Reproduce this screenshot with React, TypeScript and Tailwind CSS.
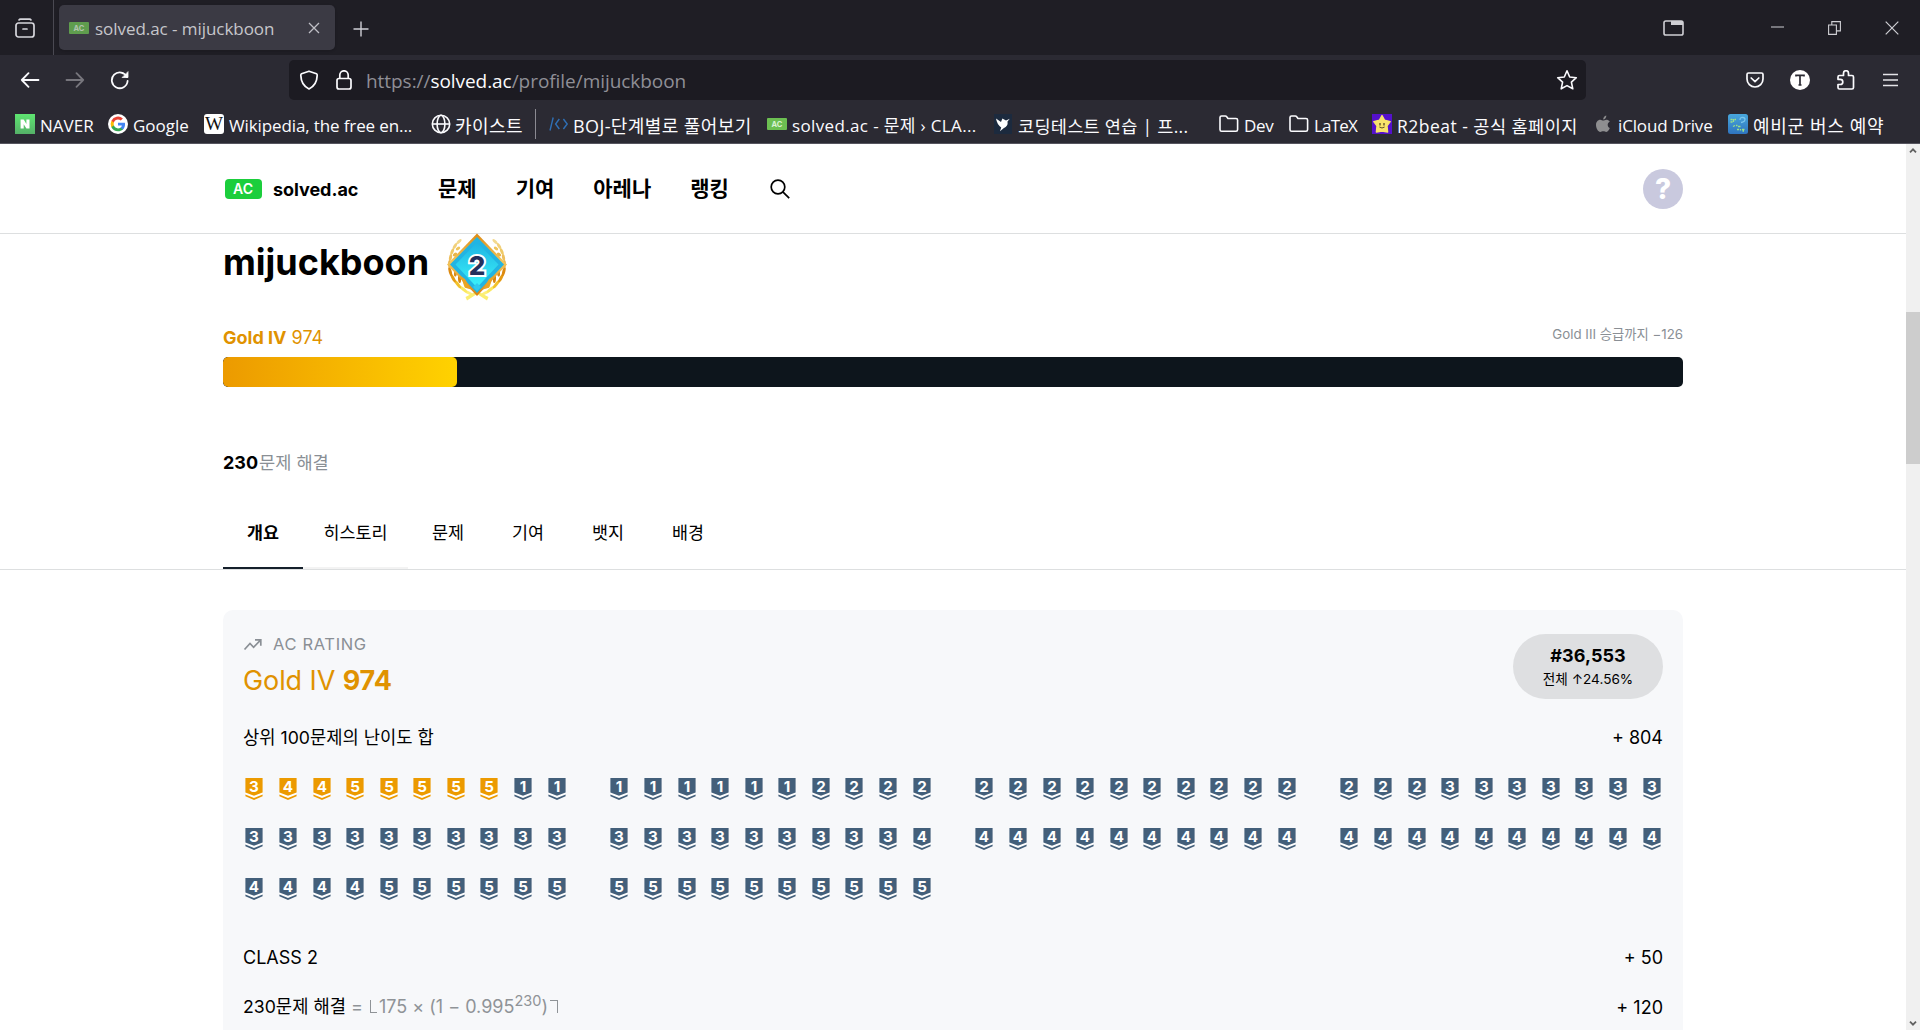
import type { ReactNode } from "react";

function AcFavicon() {
  return (
    <svg width="20" height="20" viewBox="0 0 20 20">
      <rect y="4" width="20" height="12" rx="1" fill="#6cbf52" />
      <text x="10" y="12.8" textAnchor="middle" className="fill-[#d9f2d2] font-['Inter'] text-[7.5px] font-bold">
        AC
      </text>
    </svg>
  );
}

function GlobeIcon() {
  return (
    <svg width="20" height="20" viewBox="0 0 20 20" fill="none" stroke="#fbfbfe" strokeWidth="1.6">
      <circle cx="10" cy="10" r="8.7" />
      <ellipse cx="10" cy="10" rx="3.9" ry="8.7" />
      <path d="M1.5 10h17" />
    </svg>
  );
}

function FolderIcon() {
  return (
    <svg width="20" height="20" viewBox="0 0 20 20" fill="none" stroke="#fbfbfe" strokeWidth="1.6" strokeLinejoin="round">
      <path d="M1 15.5V3.6Q1 2 2.6 2H6.4Q7.2 2 7.7 2.7L9 4.5H17Q18.6 4.5 18.6 6.1V15.5Q18.6 17.2 17 17.2H2.6Q1 17.2 1 15.5Z" />
    </svg>
  );
}

function NaverIcon() {
  return (
    <svg width="20" height="20" viewBox="0 0 20 20">
      <defs>
        <linearGradient id="naver" x1="0" y1="0" x2="0" y2="1">
          <stop offset="0" stopColor="#5ee571" />
          <stop offset="1" stopColor="#55b068" />
        </linearGradient>
      </defs>
      <rect width="20" height="20" fill="url(#naver)" />
      <path d="M5.6 5.6h3.1l2.7 4.3V5.6h3.1v9h-3.1L8.7 10.2v4.4H5.6Z" fill="#fff" />
    </svg>
  );
}

function GoogleIcon() {
  return (
    <svg width="20" height="20" viewBox="0 0 20 20">
      <circle cx="10" cy="10" r="10" fill="#fff" />
      <g transform="translate(2.6 2.6) scale(.82)">
        <path fill="#4285F4" d="M17.6 9.2c0-.6-.1-1.2-.2-1.8H9v3.5h4.8c-.2 1.1-.8 2.1-1.8 2.7v2.3h2.9c1.7-1.6 2.7-3.9 2.7-6.7z" />
        <path fill="#34A853" d="M9 18c2.4 0 4.5-.8 6-2.2l-2.9-2.3c-.8.5-1.9.9-3.1.9-2.3 0-4.3-1.6-5-3.7H1V13c1.5 3 4.5 5 8 5z" />
        <path fill="#FBBC05" d="M4 10.7A5.4 5.4 0 0 1 4 7.3V5H1a9 9 0 0 0 0 8z" />
        <path fill="#EA4335" d="M9 3.6c1.3 0 2.5.5 3.4 1.3L15 2.3A9 9 0 0 0 1 5l3 2.3c.7-2.1 2.7-3.7 5-3.7z" />
      </g>
    </svg>
  );
}

function WikipediaIcon() {
  return (
    <svg width="20" height="20" viewBox="0 0 20 20">
      <rect width="20" height="20" rx="3" fill="#fff" />
      <text x="10" y="15.8" textAnchor="middle" textLength="18" lengthAdjust="spacingAndGlyphs" className="fill-[#111] font-['Liberation_Serif'] text-[18px]">
        W
      </text>
    </svg>
  );
}

function BojIcon() {
  return (
    <svg width="20" height="20" viewBox="0 0 20 20" fill="none" stroke="#2f6fb5" strokeWidth="1.4">
      <path d="M4.2 3.5 1 16.5" />
      <path d="M10.3 5 6.6 10l3.7 5M14.4 5l3.8 5-3.8 5" />
    </svg>
  );
}

function ProgrammersIcon() {
  return (
    <svg width="20" height="20" viewBox="0 0 20 20">
      <rect width="18" height="20" fill="#1c2a3e" />
      <path d="M2 4.5 7 8 8.4 4.4 12 6.5 15.8 4.7 13.5 7.6Q14.4 12.4 9.6 14.3L6 17.2 7.2 13.4Q3 10.5 2 4.5Z" fill="#fff" />
    </svg>
  );
}

function R2beatIcon() {
  return (
    <svg width="20" height="20" viewBox="0 0 20 20">
      <rect width="20" height="20" fill="#5511cc" />
      <path d="M10 1.5 12.6 6.3 18.2 7.6 15 11.8 15.6 18 10 17 4.4 18 5 11.8 1.8 7.6 7.4 6.3Z" fill="#f8e36b" stroke="#f8e36b" strokeWidth="1.4" strokeLinejoin="round" />
      <path d="M8 9v2.4M12 9v2.4" stroke="#4a3a20" strokeWidth="1.2" />
      <path d="M7.4 13q2.6 2 5.2 0" stroke="#4a3a20" strokeWidth=".9" fill="none" />
    </svg>
  );
}

function AppleIcon() {
  return (
    <svg width="20" height="20" viewBox="0 0 20 20" fill="#8e8e90">
      <path d="M13.2 5.8c-1.3 0-2 .8-2.9.8S8.4 5.8 7.3 5.8C5 5.8 3 7.9 3 11c0 3.3 2.3 7 4.2 7 1.2 0 1.7-.7 3.1-.7s1.8.7 3 .7c1.6 0 3-2.4 3.5-4-2.8-1.3-2.7-5 0-6.5-.9-1.2-2.3-1.7-3.6-1.7z" />
      <path d="M10.2 5.6C10 3.5 11.5 1.9 13.3 1.5c.2 2.2-1.3 4-3.1 4.1z" />
    </svg>
  );
}

function BusIcon() {
  return (
    <svg width="20" height="20" viewBox="0 0 20 20" fill="none">
      <defs>
        <linearGradient id="bus" x1="0" y1="0" x2="0" y2="1">
          <stop offset="0" stopColor="#48a7dc" />
          <stop offset="1" stopColor="#2f74bf" />
        </linearGradient>
      </defs>
      <rect width="20" height="20" rx="2.5" fill="url(#bus)" />
      <path d="M12 6q0-3 3-2.5t1.5 3.5q-2 1.5-3.5 1.5" stroke="#7cc6ec" strokeWidth="1.3" />
      <path d="M2.5 5.5h2M5.5 5v3M2.5 8h2M6.5 5.5h1.5M5 12.5l2-1M8 11.5h1.5M10 12.5h2.5M9 15.5h2M12.5 15v1.5M14 15.5h2.5M14.5 17h1.5" stroke="#9be08a" strokeWidth="1.3" />
    </svg>
  );
}

type Bookmark = { icon: ReactNode; label: string; width: string; text: string };

const bookmarksLeft: Bookmark[] = [
  { icon: <NaverIcon />, label: "NAVER", width: "w-[93px]", text: "text-[17px]" },
  { icon: <GoogleIcon />, label: "Google", width: "w-[96px]", text: "text-[17px]" },
  { icon: <WikipediaIcon />, label: "Wikipedia, the free en...", width: "w-[227px]", text: "text-[17px] tracking-[-0.12px]" },
  { icon: <GlobeIcon />, label: "카이스트", width: "w-[104px]", text: "text-[18px] tracking-[0.4px] ml-[-1px]" },
];

const bookmarksRight: Bookmark[] = [
  { icon: <BojIcon />, label: "BOJ-단계별로 풀어보기", width: "w-[218px]", text: "text-[18px] tracking-[0.4px] ml-[-1px]" },
  { icon: <AcFavicon />, label: "solved.ac - 문제 › CLA...", width: "w-[227px]", text: "text-[17px] tracking-[0.36px]" },
  { icon: <ProgrammersIcon />, label: "코딩테스트 연습 | 프...", width: "w-[225px]", text: "text-[17.5px] tracking-[0.3px] ml-[-1px]" },
  { icon: <FolderIcon />, label: "Dev", width: "w-[70px]", text: "text-[17px] tracking-[-0.3px]" },
  { icon: <FolderIcon />, label: "LaTeX", width: "w-[83px]", text: "text-[17px] tracking-[-0.8px]" },
  { icon: <R2beatIcon />, label: "R2beat - 공식 홈페이지", width: "w-[221px]", text: "text-[17.5px] tracking-[0.48px]" },
  { icon: <AppleIcon />, label: "iCloud Drive", width: "w-[135px]", text: "text-[17px] tracking-[-0.15px]" },
  { icon: <BusIcon />, label: "예비군 버스 예약", width: "w-[160px]", text: "text-[18px] tracking-[0.65px]" },
];

function BookmarkItem({ icon, label, width, text }: Bookmark) {
  return (
    <div className={`flex shrink-0 items-center gap-[5px] ${width}`}>
      <span className="mt-[-4px] shrink-0">{icon}</span>
      <span className={`whitespace-nowrap leading-[22px] text-[#fbfbfe] ${text}`}>{label}</span>
    </div>
  );
}

function TabStrip() {
  return (
    <div className="flex h-[55px] shrink-0 items-stretch bg-[#1f1e25]">
      <div className="flex w-[54px] items-center border-r border-[#4a4952] pl-[15px]">
        <svg width="20" height="22" viewBox="0 0 20 22" className="mt-[2px]" fill="none" stroke="#d6d6dc" strokeWidth="1.7" strokeLinecap="round">
          <path d="M4 1.9Q4.5 1.2 5.5 1.2h9q1 0 1.5.7" />
          <rect x="1" y="5" width="18" height="14" rx="2.5" />
          <path d="M8 11h4" />
        </svg>
      </div>
      <div className="my-[5px] ml-[5px] flex w-[276px] items-center rounded-[5px] bg-[#3b3a44] shadow">
        <span className="ml-[10px] opacity-75">
          <AcFavicon />
        </span>
        <span className="ml-[6px] mt-[2px] w-[200px] whitespace-nowrap text-[17px] tracking-[-0.05px] text-[#c6c6cb]">solved.ac - mijuckboon</span>
        <svg width="12" height="12" viewBox="0 0 12 12" className="ml-[13px]" stroke="#bfbfc6" strokeWidth="1.3">
          <path d="M1 1l10 10M11 1 1 11" />
        </svg>
      </div>
      <div className="ml-[18px] mt-[2px] flex items-center">
        <svg width="16" height="16" viewBox="0 0 16 16" stroke="#cfcfd6" strokeWidth="1.4">
          <path d="M8 .5v15M.5 8h15" />
        </svg>
      </div>
      <div className="ml-auto flex items-center">
        <svg width="21" height="16" viewBox="0 0 21 16" fill="none" stroke="#cfcfd4" strokeWidth="1.6">
          <rect x="1" y="1" width="19" height="14" rx="1.8" />
          <path d="M8 1h12v4H8z" fill="#cfcfd4" stroke="none" />
        </svg>
        <svg width="13" height="2" className="ml-[87px] mt-[-1px]" fill="#cfcfd4">
          <path d="M0 .5h13v1H0z" />
        </svg>
        <svg width="13" height="14" viewBox="0 0 13 14" className="ml-[44px]" fill="none" stroke="#cfcfd4" strokeWidth="1.1">
          <path d="M.6 4h7.8v9.4H.6zM3.8 4V.6h8.6v9.3h-4" />
        </svg>
        <svg width="14" height="14" viewBox="0 0 14 14" className="ml-[44px] mr-[21px]" stroke="#cfcfd4" strokeWidth="1.2">
          <path d="M.7.7l12.6 12.6M13.3.7.7 13.3" />
        </svg>
      </div>
    </div>
  );
}

function Toolbar() {
  return (
    <div className="flex h-[50px] shrink-0 items-center">
      <svg width="20" height="16" viewBox="0 0 20 16" className="ml-[20px]" fill="none" stroke="#fbfbfe" strokeWidth="1.8" strokeLinecap="round" strokeLinejoin="round">
        <path d="M18.5 8H1.8M8.5 1.2 1.8 8l6.7 6.8" />
      </svg>
      <svg width="20" height="16" viewBox="0 0 20 16" className="ml-[25px]" fill="none" stroke="#77767d" strokeWidth="1.8" strokeLinecap="round" strokeLinejoin="round">
        <path d="M1.5 8h16.7M11.5 1.2 18.2 8l-6.7 6.8" />
      </svg>
      <svg width="20" height="20" viewBox="0 0 20 20" className="ml-[25px]" fill="none" stroke="#fbfbfe" strokeWidth="1.8" strokeLinecap="round">
        <path d="M16.9 7A7.9 7.9 0 1 0 17.6 11" />
        <path d="M18 2v5.5h-5.5z" fill="#fbfbfe" stroke="#fbfbfe" strokeWidth=".8" />
      </svg>
      <div className="ml-[159px] flex h-[40px] w-[1297px] items-center rounded-[5px] bg-[#1c1b22]">
        <svg width="20" height="20" viewBox="0 0 20 20" className="ml-[10px]" fill="none" stroke="#fbfbfe" strokeWidth="1.7" strokeLinejoin="round">
          <path d="M10 1.2 17.5 3.8Q18.3 4.2 18.2 5.4C18 11.5 15.2 16.5 10 18.9 4.8 16.5 2 11.5 1.8 5.4Q1.7 4.2 2.5 3.8Z" />
        </svg>
        <svg width="16" height="20" viewBox="0 0 16 20" className="ml-[17px]" fill="none" stroke="#fbfbfe" strokeWidth="1.7">
          <rect x="1" y="8.5" width="14" height="10.5" rx="2" />
          <path d="M3.8 8.5V5a4.2 4.2 0 0 1 8.4 0v3.5" />
        </svg>
        <span className="ml-[14px] mt-[2px] text-[19px] tracking-[-0.05px] text-[#8f8f96]">
          https://<span className="text-[#fbfbfe]">solved.ac</span>/profile/mijuckboon
        </span>
        <svg width="22" height="22" viewBox="0 0 22 22" className="ml-auto mr-[8px]" fill="none" stroke="#fbfbfe" strokeWidth="1.6" strokeLinejoin="round">
          <path d="m11 1.8 2.7 6.2 6.6.7-4.9 4.5 1.4 6.6L11 16.6l-5.8 3.2 1.4-6.6L1.7 8.7 8.3 8Z" />
        </svg>
      </div>
      <div className="ml-auto flex items-center">
        <svg width="18" height="17" viewBox="0 0 18 17" fill="none" stroke="#fbfbfe" strokeWidth="1.7" strokeLinecap="round" strokeLinejoin="round">
          <path d="M2.5 1h13Q17 1 17 2.5V7a8 8 0 0 1-16 0V2.5Q1 1 2.5 1Z" />
          <path d="m5.2 6 3.8 3.6L12.8 6" />
        </svg>
        <svg width="20" height="20" viewBox="0 0 20 20" className="ml-[26px]">
          <circle cx="10" cy="10" r="10" fill="#fff" />
          <path d="M6 6.5V5.3h8v1.2M10 5.5V15M8.5 15h3" stroke="#2b2a33" strokeWidth="1.7" fill="none" />
        </svg>
        <svg width="18" height="20" viewBox="0 0 18 20" className="ml-[27px]" fill="none" stroke="#fbfbfe" strokeWidth="1.7" strokeLinejoin="round">
          <path d="M1 8V7q0-1.5 1.5-1.5H6.5V3.2a2.5 2.5 0 0 1 5 0V5.5h3.500q1.500 0 1.500 1.500V17.500Q16.500 19 15 19H2.500Q1 19 1 17.500V14.500H3.200a2.600 2.600 0 0 0 0-5.200H1Z" />
        </svg>
        <svg width="15" height="14" viewBox="0 0 15 14" className="ml-[28px] mr-[22px]" stroke="#e4e4e8" strokeWidth="1.5">
          <path d="M0 1.5h15M0 7h15M0 12.5h15" />
        </svg>
      </div>
    </div>
  );
}

function LaurelSide() {
  const leaves = [
    [23, 60, -62, 5.5, "#fdf07a"],
    [17, 56, -50, 5.5, "#fbe860"],
    [11.5, 51, -38, 5.5, "#f3c22c"],
    [7, 45, -28, 5, "#e59a12"],
    [4.2, 38.5, -15, 4.6, "#dd8a10"],
    [3.6, 31, 0, 4, "#e8b04c"],
    [4.5, 24.5, 10, 3.6, "#eebf5e"],
    [6.2, 18.5, 22, 3.4, "#efc966"],
    [9, 13, 32, 3.4, "#f1d07a"],
    [13, 8.5, 45, 3.2, "#f3d98e"],
    [19, 51, -12, 4, "#f0b420"],
    [13.5, 46, -4, 4, "#d9860f"],
    [9.5, 40, 6, 3.6, "#d98a18"],
    [9, 21.5, 50, 2.4, "#e8b548"],
    [12, 15.5, 60, 2.4, "#efc55c"],
  ] as const;
  return (
    <g>
      {leaves.map(([x, y, angle, length, color]) => (
        <ellipse key={`${x}-${y}`} cx={x} cy={y} rx="1.5" ry={length} fill={color} transform={`rotate(${angle} ${x} ${y})`} />
      ))}
      <path d="M31 61 21 67.5l-1.5-3.5L29 59Z" fill="#fbee70" />
    </g>
  );
}

function ClassBadge() {
  return (
    <svg width="62" height="68" viewBox="0 0 62 68">
      <defs>
        <linearGradient id="badge-fill" x1="0" y1="0" x2="0" y2="1">
          <stop offset="0" stopColor="#1fb4e2" />
          <stop offset="1" stopColor="#3bf3fb" />
        </linearGradient>
        <linearGradient id="badge-rim" x1="0" y1="0" x2="0" y2="1">
          <stop offset="0" stopColor="#dc8a14" />
          <stop offset=".45" stopColor="#f2c65c" />
          <stop offset="1" stopColor="#d98210" />
        </linearGradient>
      </defs>
      <LaurelSide />
      <g transform="translate(62 0) scale(-1 1)">
        <LaurelSide />
      </g>
      <path d="M31 .5 61 31.5 31 63 1 31.5Z" fill="url(#badge-rim)" />
      <path d="M31 4 58 31.5 31 60 4 31.5Z" fill="#22b4e2" />
      <path d="M31 9.5 52.5 31.5 31 54.5 9.5 31.5Z" fill="url(#badge-fill)" />
      <path d="M27 54 31 58.5 35 54 31 50Z" fill="#30c9ee" />
      <path d="M13 42 19 46 25 56.5 20 55ZM49 42 43 46 37 56.5 42 55Z" fill="#e9a326" />
      <text x="31" y="41.5" textAnchor="middle" className="fill-[#24305c] stroke-white stroke-[4px] font-['Inter'] text-[26px] font-extrabold [paint-order:stroke]">
        2
      </text>
    </svg>
  );
}

function SiteHeader() {
  return (
    <header className="flex h-[90px] shrink-0 items-center border-b border-[#dddfe0] pl-[224.5px] pr-[223px]">
      <div className="flex h-[20px] w-[37px] items-center justify-center rounded-[4px] bg-[#1bce3c] text-[14px] font-semibold text-white">AC</div>
      <span className="ml-[11.5px] mt-[1px] w-[165px] text-[18px] font-bold tracking-[-0.05px]">solved.ac</span>
      <nav className="flex gap-[39px] text-[21px] font-bold leading-[30px]">
        <span>문제</span>
        <span>기여</span>
        <span>아레나</span>
        <span>랭킹</span>
      </nav>
      <svg width="20" height="20" viewBox="0 0 20 20" className="ml-[41px]" fill="none" stroke="#000" strokeWidth="1.7">
        <circle cx="8" cy="8" r="6.8" />
        <path d="m12.8 12.8 6.4 6.4" />
      </svg>
      <div className="ml-auto flex h-[40px] w-[40px] items-center justify-center rounded-full bg-[#c9c9de] text-[28px] font-extrabold text-white">?</div>
    </header>
  );
}

const tabs = [
  { label: "개요", className: "w-[80px] border-[#15202b] font-bold" },
  { label: "히스토리", className: "w-[105px] border-[#f3f3f3]" },
  { label: "문제", className: "w-[80px] border-transparent" },
  { label: "기여", className: "w-[80px] border-transparent" },
  { label: "뱃지", className: "w-[80px] border-transparent" },
  { label: "배경", className: "w-[80px] border-transparent" },
];

function Profile() {
  return (
    <>
      <div className="px-[223px]">
        <div className="flex h-[67px] items-start">
          <h1 className="mt-[6px] w-[222.5px] text-[36px] font-bold leading-[44px]">mijuckboon</h1>
          <div className="mt-[-1px]">
            <ClassBadge />
          </div>
        </div>
        <div className="mt-[22px] flex h-[34px] items-start justify-between">
          <span className="mt-[3px] text-[18px] leading-[24px] text-[#e09200]">
            <b>Gold IV</b> 974
          </span>
          <span className="text-[13.3px] leading-[22px] text-[#8a8f95]">Gold III 승급까지 −126</span>
        </div>
        <div className="h-[30px] overflow-hidden rounded-[5px] bg-[#0d151c]">
          <div className="h-full w-[234px] rounded-[5px] bg-linear-to-r from-[#ec9a00] to-[#ffd200]" />
        </div>
        <div className="mt-[62px] flex h-[26px] items-center">
          <b className="text-[18px]">230</b>
          <span className="ml-[1px] mt-[2px] text-[17.6px] text-[#8a8f95]">문제 해결</span>
        </div>
      </div>
      <div className="mt-[20px] flex h-[75px] border-b border-[#dddfe0] px-[223px]">
        {tabs.map((tab) => (
          <div key={tab.label} className={`flex h-[74px] items-center justify-center border-b-2 pt-[4px] text-[17.4px] ${tab.className}`}>
            {tab.label}
          </div>
        ))}
      </div>
    </>
  );
}

function TierIcon({ tier, level }: { tier: "gold" | "silver"; level: string }) {
  return (
    <svg width="18" height="22" viewBox="0 0 18 22" className={tier === "gold" ? "fill-[#ec9a00]" : "fill-[#435f7a]"}>
      <path d="M.4 14h17.2v4L9 22 .4 18Z" fill="#fff" />
      <path d="M.4 0h17.2v14.5L9 17.8.4 14.5Z" />
      <path d="M.4 16.4 9 19.9l8.6-3.5v1.9L9 22 .4 18.3Z" />
      <text x="9" y="14.2" textAnchor="middle" className="fill-white font-['Inter'] text-[15.2px] font-bold">
        {level}
      </text>
    </svg>
  );
}

const solved = [
  "3445555511", "1111112222", "2222222222", "2223333333",
  "3333333333", "3333333334", "4444444444", "4444444444",
  "4444555555", "5555555555",
];

function RatingRow({ label, value }: { label: ReactNode; value: string }) {
  return (
    <div className="flex h-[50px] items-center justify-between text-[18px]">
      <span>{label}</span>
      <span>{value}</span>
    </div>
  );
}

function RatingCard() {
  return (
    <section className="mx-[223px] mt-[40px] h-[460px] rounded-t-[10px] bg-[#f7f8fa] px-[20px]">
      <div className="flex justify-between">
        <div className="pt-[22px]">
          <div className="flex h-[24px] items-center text-[16.5px] tracking-[0.65px] text-[#8a8f95]">
            <svg width="19" height="13" viewBox="0 0 19 13" className="mr-[11px]" fill="none" stroke="#8a8f95" strokeWidth="1.7">
              <path d="M1.5 11.5 7 5.5l3.6 3.8L17.5 2.2M12 1.8h5.8v6" />
            </svg>
            AC RATING
          </div>
          <div className="mt-[7px] text-[27px] leading-[36px] tracking-[-0.1px] text-[#e09200]">
            Gold IV <b>974</b>
          </div>
        </div>
        <div className="mt-[24px] flex h-[65px] w-[150px] flex-col items-center justify-center rounded-full bg-[#dedfe1]">
          <b className="text-[18px] leading-[24px] tracking-[0.05px]">#36,553</b>
          <span className="text-[13.6px] leading-[22px]">전체 ↑24.56%</span>
        </div>
      </div>
      <div className="mt-[13px]">
        <RatingRow label={<span className="relative top-px text-[17.7px]">상위 100문제의 난이도 합</span>} value="+ 804" />
      </div>
      <div className="mb-[18px] mt-[2px] grid grid-cols-4 gap-x-[40px]">
        {solved.map((levels, group) => (
          <div key={group} className="flex h-[50px] items-center justify-between px-[2.4px]">
            {levels.split("").map((level, i) => (
              <TierIcon key={i} level={level} tier={group === 0 && i < 8 ? "gold" : "silver"} />
            ))}
          </div>
        ))}
      </div>
      <RatingRow label="CLASS 2" value="+ 50" />
      <RatingRow
        label={
          <>
            <span className="text-[17.7px]">230문제 해결</span>
            <span className="text-[#8f9397]">
              {" = "}
              <span className="mx-[2px] inline-block h-[13px] w-[7px] border-b border-l border-[#8f9397]" aria-label="⌊" />
              175 × (1 − 0.995<sup className="text-[14.5px]">230</sup>)
              <span className="ml-[2px] inline-block h-[13px] w-[8px] border-r border-t border-[#8f9397]" aria-label="⌉" />
            </span>
          </>
        }
        value="+ 120"
      />
    </section>
  );
}

function Scrollbar() {
  return (
    <div className="flex w-[14px] shrink-0 flex-col items-center bg-[#f0f0f0]">
      <svg width="8" height="5" viewBox="0 0 8 5" className="mt-[4px]" fill="none" stroke="#606060" strokeWidth="1.8">
        <path d="M1 4.3 4 1.3l3 3" />
      </svg>
      <div className="mt-[159px] h-[152px] w-full bg-[#cdcdcd]" />
      <svg width="8" height="5" viewBox="0 0 8 5" className="mb-[4px] mt-auto" fill="none" stroke="#606060" strokeWidth="1.8">
        <path d="m1 .7 3 3 3-3" />
      </svg>
    </div>
  );
}

export default function App() {
  return (
    <div className="flex h-[1030px] w-[1920px] flex-col overflow-hidden bg-white">
      <div className="flex h-[144px] shrink-0 flex-col border-b border-[#56555f] bg-[#2b2a33] font-['Open_Sans','Noto_Sans_CJK_KR',sans-serif]">
        <TabStrip />
        <Toolbar />
        <div className="flex h-[38px] items-center pl-[15px] pt-[3px]">
          {bookmarksLeft.map((item) => (
            <BookmarkItem key={item.label} {...item} />
          ))}
          <div className="mr-[13px] mt-[-3px] h-[30px] w-px shrink-0 bg-[#8b8a92]" />
          {bookmarksRight.map((item) => (
            <BookmarkItem key={item.label} {...item} />
          ))}
        </div>
      </div>
      <div className="flex min-h-0 flex-1 font-['Inter','Noto_Sans_CJK_KR',sans-serif] text-black">
        <main className="min-w-0 flex-1 overflow-hidden">
          <SiteHeader />
          <Profile />
          <RatingCard />
        </main>
        <Scrollbar />
      </div>
    </div>
  );
}
